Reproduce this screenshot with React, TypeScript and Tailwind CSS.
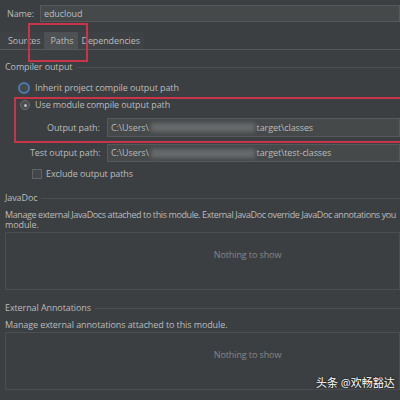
import React from "react";

const font = { fontFamily: '"Open Sans", "Noto Sans CJK SC", sans-serif' };

function Field({ value, tail, h }: { value: string; tail?: string; h: string }) {
  return (
    <div className={`flex ${h} flex-1 items-center border border-[#55595b] bg-[#45494a] pl-[3px] text-[#bbbbbb]`}>
      <span>{value}</span>
      {tail && (
        <>
          <span className="ml-[2px] h-[9px] w-[104px] bg-[#7d8082] opacity-60 blur-[2px]" />
          <span className="ml-[2px]">{tail}</span>
        </>
      )}
    </div>
  );
}

function Section({ title }: { title: string }) {
  return (
    <div className="flex h-[10px] items-center gap-[4px] pl-[5px]">
      <span>{title}</span>
      <div className="h-px flex-1 bg-[#4b4e50]" />
    </div>
  );
}

function EmptyBox() {
  return (
    <div className="ml-[5px] mt-[2px] flex h-[58px] justify-center border border-[#4b4e50] pt-[17px] pl-[90px] text-[#858789]">
      Nothing to show
    </div>
  );
}

export default function App() {
  return (
    <div
      style={font}
      className="relative h-[400px] w-[400px] overflow-hidden whitespace-nowrap bg-[#3c3f41] text-[9px] leading-[10px] tracking-[-0.1px] text-[#b9bbbd]"
    >
      {/* Name */}
      <div className="flex items-center pt-[5px]">
        <span className="w-[40px] pl-[7px]">Name:</span>
        <Field value="educloud" h="h-[17px]" />
      </div>

      {/* Tabs */}
      <div className="mt-[10px] flex h-[18px] items-stretch border-b border-[#55595b]">
        <div className="flex items-center bg-[#3f4244] pl-[8px] pr-[3px]">Sources</div>
        <div className="flex items-center bg-[#4d5153] pl-[7px] pr-[5px]">Paths</div>
        <div className="flex items-center bg-[#3f4244] pl-[3px] pr-[4px]">Dependencies</div>
      </div>

      <div className="mt-[12px]">
        <Section title="Compiler output" />
      </div>

      <div className="mt-[10px] flex h-[12px] items-center pl-[18px]">
        <span className="h-[12px] w-[12px] rounded-full border-2 border-[#4a7ab0] bg-[#45494a]" />
        <span className="ml-[5px]">Inherit project compile output path</span>
      </div>

      <div className="mt-[5px] flex h-[12px] items-center pl-[20px]">
        <span className="flex h-[10px] w-[10px] items-center justify-center rounded-full border border-[#6b6e70] bg-[#4a4e50]">
          <span className="h-[3px] w-[3px] rounded-full bg-[#bbbbbb]" />
        </span>
        <span className="ml-[5px]">Use module compile output path</span>
      </div>

      <div className="mt-[7px] flex items-center">
        <span className="w-[107px] pl-[47px]">Output path:</span>
        <Field value="C:\Users\" tail="target\classes" h="h-[19px]" />
      </div>
      <div className="mt-[7px] flex items-center">
        <span className="w-[107px] pl-[30px]">Test output path:</span>
        <Field value="C:\Users\" tail="target\test-classes" h="h-[18px]" />
      </div>

      <div className="mt-[7px] flex h-[10px] items-center pl-[32px]">
        <span className="h-[10px] w-[10px] border border-[#5f6366] bg-[#43474a]" />
        <span className="ml-[4px]">Exclude output paths</span>
      </div>

      <div className="mt-[14px]">
        <Section title="JavaDoc" />
      </div>
      <p className="mt-[7px] pl-[5px]">
        <span className="tracking-[-0.4px]">
          Manage external JavaDocs attached to this module. External JavaDoc override JavaDoc annotations you
        </span>
        <br />
        module.
      </p>
      <EmptyBox />

      <div className="mt-[13px]">
        <Section title="External Annotations" />
      </div>
      <p className="mt-[7px] pl-[5px]">Manage external annotations attached to this module.</p>
      <EmptyBox />

      {/* highlight boxes */}
      <div className="absolute left-[28px] top-[23px] h-[39px] w-[60px] border-2 border-[#c9344a]" />
      <div className="absolute left-[14px] top-[97px] h-[46px] w-[392px] border-2 border-[#c9344a]" />

      <div className="absolute left-[316px] top-[377px] text-[11px] leading-[12px] tracking-normal text-white [text-shadow:0_0_2px_#000]">
        头条 @欢畅豁达
      </div>
    </div>
  );
}
